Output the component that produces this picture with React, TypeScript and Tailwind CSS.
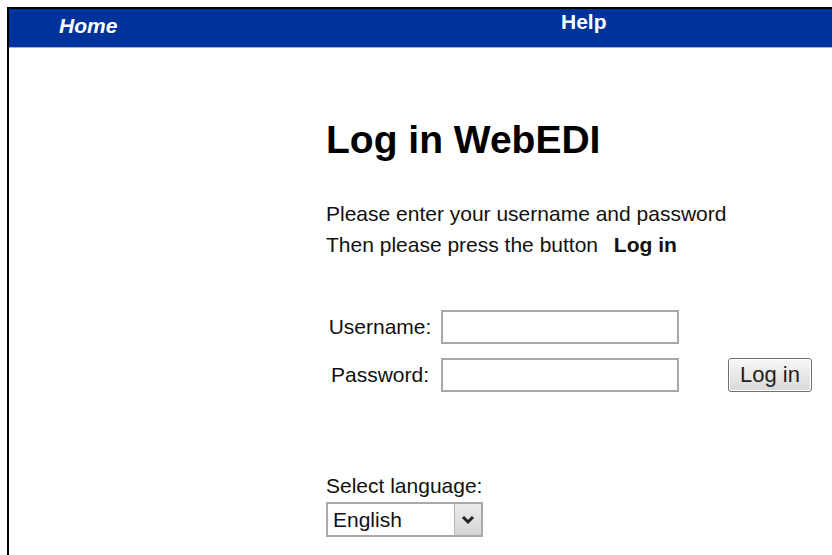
import React from "react";

const font = { fontFamily: '"Liberation Sans", Arial, sans-serif' };

const LoginPage: React.FC = () => {
  return (
    <div className="min-h-screen bg-white pl-[7px] pt-[7px] text-black" style={font}>
      <div className="min-h-[548px] border-l-2 border-t-2 border-black">
        {/* top navigation bar */}
        <header className="flex h-[39px] border-b border-[#9fb3dd] bg-[#003399] text-[21px] font-bold leading-[24px] text-white">
          <a href="#" className="w-[552px] pl-[50px] pt-[5px] italic">
            Home
          </a>
          <a href="#" className="pt-[1px]">
            Help
          </a>
        </header>

        <main className="pl-[317px]">
          <h1 className="mt-[70px] text-[39px] font-bold leading-[44px]">Log in WebEDI</h1>

          <p className="mt-[36px] text-[21px] leading-[31px] text-[#111]">
            Please enter your username and password
            <br />
            Then please press the button <b className="ml-[10px]">Log in</b>
          </p>

          <form className="mt-[50px] flex flex-col gap-[14px] text-[21px] leading-[24px] text-[#111]">
            <div className="flex items-center">
              <label className="w-[108px] text-center">Username:</label>
              <input
                type="text"
                className="ml-[7px] h-[34px] w-[238px] border-2 border-[#a9a9a9] bg-white px-1 outline-none"
              />
            </div>
            <div className="flex items-center">
              <label className="w-[108px] text-center">Password:</label>
              <input
                type="password"
                className="ml-[7px] h-[34px] w-[238px] border-2 border-[#a9a9a9] bg-white px-1 outline-none"
              />
              <button
                type="button"
                className="ml-[49px] -mt-[1px] h-[34px] w-[84px] rounded-[3px] border border-[#707070] bg-gradient-to-b from-[#f7f7f7] to-[#d9d9d9] text-[22px] leading-[24px] text-[#222] shadow-[inset_0_0_0_1px_#fff]"
              >
                Log in
              </button>
            </div>
          </form>

          <div className="mt-[82px] text-[21px] leading-[24px] text-[#111]">
            <div>Select language:</div>
            <div className="relative mt-[4px] h-[35px] w-[157px]">
              <select className="h-full w-full appearance-none border-2 border-[#a9a9a9] bg-white pl-[5px] text-[21px] outline-none">
                <option>English</option>
                <option>Deutsch</option>
                <option>Français</option>
              </select>
              {/* dropdown arrow button */}
              <div className="pointer-events-none absolute right-[2px] top-[2px] flex h-[31px] w-[27px] items-center justify-center border-l border-[#b5b5b5] bg-gradient-to-b from-[#ececec] to-[#d4d4d4]">
                <svg width="14" height="10" viewBox="0 0 14 10">
                  <polyline points="2,2 7,7 12,2" fill="none" stroke="#222" strokeWidth="3" />
                </svg>
              </div>
            </div>
          </div>
        </main>
      </div>
    </div>
  );
};

export default function App() {
  return <LoginPage />;
}
